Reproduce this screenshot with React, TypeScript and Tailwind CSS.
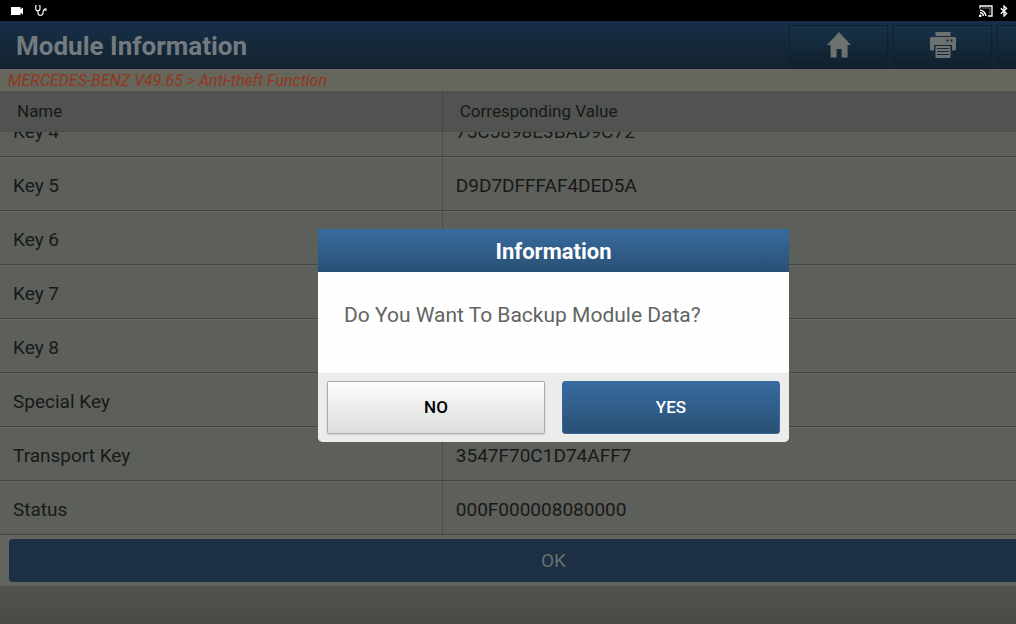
interface ModuleRow {
  name: string;
  value: string;
}

const rows: ModuleRow[] = [
  { name: "Key 4", value: "75C5898E3BAD9C72" },
  { name: "Key 5", value: "D9D7DFFFAF4DED5A" },
  { name: "Key 6", value: "" },
  { name: "Key 7", value: "" },
  { name: "Key 8", value: "" },
  { name: "Special Key", value: "" },
  { name: "Transport Key", value: "3547F70C1D74AFF7" },
  { name: "Status", value: "000F000008080000" },
];

const toolbarButton =
  "w-[99px] h-10 flex items-center justify-center border border-[#11222f] bg-linear-to-b from-[#17314a] to-[#11222e] text-[#6d7271]";

const StatusBar = () => {
  return (
    <div className="h-[21px] bg-black text-white flex items-center justify-between pl-[11px] pr-[99px]">
      <div className="flex items-center gap-3">
        <svg className="w-3 h-2" viewBox="0 0 12 8" fill="currentColor">
          <path d="M0 0h9.5v2.2L12 .6v6.800L9.5 5.8V8H0z" />
        </svg>
        <svg className="w-3 h-[11px]" viewBox="0 0 12 11" fill="none" stroke="currentColor" strokeWidth="1.1">
          <path d="M1.8.8H.7v2.4c0 1.6.9 2.6 2.1 2.6s2.2-1 2.2-2.6V.8H3.9M2.9 5.8v1.6c0 1.5 1 2.8 2.6 2.8s2.6-1.300 2.6-2.8c0-1.800.4-2.800 1.600-2.8" />
          <circle cx="10.4" cy="4.6" r="0.9" />
        </svg>
      </div>
      <div className="flex items-center gap-[7px]">
        <svg className="w-[14px] h-3" viewBox="0 0 14 12" fill="none" stroke="currentColor" strokeWidth="1.3">
          <path d="M1 3.6V1h12v10H9" />
          <path d="M1 5.2A6 6 0 0 1 6.8 11M1 7.6A3.6 3.6 0 0 1 4.4 11" />
          <path d="M3 3h8v6" strokeWidth="0.8" opacity="0.6" />
          <circle cx="1.2" cy="10.8" r="0.7" fill="currentColor" />
        </svg>
        <svg className="w-2 h-3" viewBox="0 0 8 12" fill="none" stroke="currentColor" strokeWidth="1.3">
          <path d="M.8 3.2 6.6 8.6 4 11V1l2.6 2.4L.8 8.8" />
        </svg>
      </div>
    </div>
  );
};

const HomeIcon = () => {
  return (
    <svg className="w-6 h-[26px]" viewBox="0 0 24 26" fill="currentColor">
      <path d="M12 0 24 13h-3.4v12.4h-6V17H9.6v8.4h-6V13H0z" />
    </svg>
  );
};

const PrinterIcon = () => {
  return (
    <svg className="w-[26px] h-[26px]" viewBox="0 0 26 26">
      <path d="M5.5 0h15v4h-15zM1.5 5h23A1.5 1.5 0 0 1 26 6.5V17a1.5 1.5 0 0 1-1.5 1.5H22V13H4v5.5H1.5A1.5 1.5 0 0 1 0 17V6.5A1.5 1.5 0 0 1 1.5 5zM5.5 14h15v12h-15z" fill="currentColor" />
      <path d="M7 16.5h12M7 19.5h12M7 22.5h12" stroke="#152a3b" strokeWidth="1.2" />
      <path d="M16.5 7.5h2v2h-2zM20.5 7.5h2v2h-2z" fill="#152a3b" />
    </svg>
  );
};

const TitleBar = () => {
  return (
    <header className="h-12 bg-linear-to-b from-[#182f49] to-[#12222e] flex items-center justify-between pl-4 pr-[11px]">
      <h1 className="pt-0.5 text-[26px] leading-8 font-bold text-[#737b80]">Module Information</h1>
      <div className="flex gap-[5px]">
        <button type="button" aria-label="Home" className={toolbarButton}>
          <HomeIcon />
        </button>
        <button type="button" aria-label="Print" className={toolbarButton}>
          <PrinterIcon />
        </button>
        <button type="button" aria-label="More" className={toolbarButton} />
      </div>
    </header>
  );
};

const ModuleTable = () => {
  return (
    <div className="h-[444px] flex flex-col bg-[#5d5f5b] text-[#171917]">
      <table className="w-full shrink-0 table-fixed border-separate border-spacing-0 bg-[#515350] text-[17px] leading-6 text-left">
        <thead>
          <tr className="h-[41px]">
            <th id="col-name" className="w-2/5 pl-[17px] font-normal border-r border-b border-r-[#464845] border-b-[#4c4e4b]">
              Name
            </th>
            <th id="col-value" className="pl-[17px] font-normal border-b border-[#4c4e4b]">
              Corresponding Value
            </th>
          </tr>
        </thead>
      </table>
      {/* list is scrolled to its end, so the first row slides under the heading */}
      <div className="flex-1 min-h-0 overflow-hidden flex flex-col justify-end">
        <table className="w-full table-fixed border-separate border-spacing-0 text-[19px] leading-6">
          <tbody>
            {rows.map((row) => (
              <tr key={row.name} className="h-[54px]">
                <td
                  headers="col-name"
                  className="w-2/5 pl-[13px] pt-[3px] border-r border-b border-t border-r-[#4a4c49] border-b-[#434542] border-t-[#656763]"
                >
                  {row.name}
                </td>
                <td headers="col-value" className="pl-[13px] pt-[3px] border-b border-t border-b-[#434542] border-t-[#656763]">
                  {row.value}
                </td>
              </tr>
            ))}
          </tbody>
        </table>
      </div>
    </div>
  );
};

const BackupDialog = () => {
  return (
    <div className="absolute inset-0 flex items-start justify-center pt-[229px]">
      <div role="dialog" aria-labelledby="dialog-title" className="w-[471px] rounded-b-[5px] overflow-hidden bg-[#fdfefd]">
        <h2
          id="dialog-title"
          className="h-[43px] flex items-center justify-center pt-0.5 bg-linear-to-b from-[#376ca1] to-[#2a5074] text-white text-[22px] font-bold"
        >
          Information
        </h2>
        <p className="h-[101px] px-[26px] pt-7 text-[21px] leading-[30px] text-[#626462]">
          Do You Want To Backup Module Data?
        </p>
        <div className="h-[69px] bg-[#ebedec] flex gap-[17px] px-[9px] pt-2">
          <button
            type="button"
            className="flex-1 h-[53px] rounded-xs border border-[#a9abaa] bg-linear-to-b from-[#fcfdfc] to-[#dcdedc] text-black text-[17px] font-medium shadow-sm"
          >
            NO
          </button>
          <button
            type="button"
            className="flex-1 h-[53px] rounded-[3px] border border-[#3a6797] bg-linear-to-b from-[#376ba1] to-[#2a5074] text-white text-[17px] font-medium"
          >
            YES
          </button>
        </div>
      </div>
    </div>
  );
};

const App = () => {
  return (
    <div className="h-screen overflow-hidden bg-[#4d4f4b] font-[Roboto,sans-serif]">
      <div className="relative min-w-[1107px] h-full flex flex-col">
        <StatusBar />
        <TitleBar />
        <div className="h-[22px] pl-2 bg-[#65665c] text-[#933621] text-base leading-6 italic">
          MERCEDES-BENZ V49.65 &gt; Anti-theft Function
        </div>
        <ModuleTable />
        <div className="h-[51px] shrink-0 px-[9px] pt-1 bg-[#61645f]">
          <button type="button" className="w-full h-[43px] pt-0.5 rounded-[4px] bg-[#1c2f44] text-[#68706f] text-[19px]">
            OK
          </button>
        </div>
        <div className="flex-1 bg-linear-to-b from-[#50524e] to-[#494b47]" />
        <BackupDialog />
      </div>
    </div>
  );
};

export default App;
